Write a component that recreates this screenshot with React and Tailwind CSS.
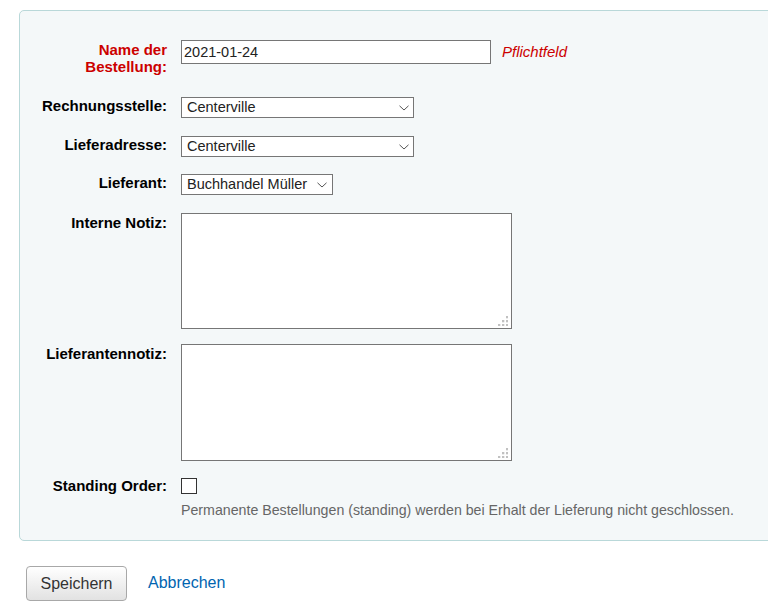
import React, { useState } from "react";

const FONT = "font-['Liberation_Sans',Arial,Helvetica,sans-serif]";

function Chevron({ className }) {
  return (
    <svg
      className={`pointer-events-none absolute top-[8px] ${className}`}
      width="10"
      height="6"
      viewBox="0 0 10 6"
      fill="none"
    >
      <path d="M0.5 0.8 L5 5 L9.5 0.8" stroke="#555" strokeWidth="1" />
    </svg>
  );
}

function Grip() {
  // Griffpunkte unten rechts am Textfeld
  const dots = [
    [8, 0],
    [4, 4],
    [8, 4],
    [0, 8],
    [4, 8],
    [8, 8],
  ];
  return (
    <svg
      className="pointer-events-none absolute right-[4px] bottom-[3px]"
      width="10"
      height="10"
      viewBox="0 0 10 10"
    >
      {dots.map(([x, y], i) => (
        <rect key={i} x={x} y={y} width="2.3" height="2.3" fill="#c1c1c1" />
      ))}
    </svg>
  );
}

function Row({ label, required, className = "", labelClass = "", children }) {
  return (
    <div className={`flex items-start ${className}`}>
      <label
        className={`block w-[140px] shrink-0 text-right font-bold text-[15px] leading-[17px] mr-[14px] ${
          required ? "text-[#cc0000]" : "text-black"
        } ${labelClass}`}
      >
        {label}
      </label>
      {children}
    </div>
  );
}

export default function App() {
  const [name, setName] = useState("2021-01-24");
  const [invoice, setInvoice] = useState("Centerville");
  const [delivery, setDelivery] = useState("Centerville");
  const [vendor, setVendor] = useState("Buchhandel Müller");
  const [standing, setStanding] = useState(false);

  const selectCls =
    "block appearance-none h-[21px] border border-[#767676] bg-white pl-[5px] text-[14.5px] leading-[19px] text-[#222] outline-none";

  return (
    <div className={`w-full min-h-[615px] overflow-hidden bg-white ${FONT}`}>
      <div className="mt-[10px] ml-[19px] mr-[-20px] border border-[#b9d8d9] rounded-[5px] bg-[#f4f8f9] pt-[29px] pb-[21px] pl-[7px]">
        <Row label="Name der Bestellung:" required labelClass="pt-[1px]">
          <input
            type="text"
            value={name}
            onChange={(e) => setName(e.target.value)}
            className="block w-[310px] h-[24px] border border-[#767676] bg-white pl-[2px] text-[14.5px] text-[#222] outline-none"
          />
          <span className="ml-[11px] mt-[2px] italic text-[15px] leading-[20px] text-[#cc0000]">
            Pflichtfeld
          </span>
        </Row>

        <Row label="Rechnungsstelle:" className="mt-[22px]">
          <div className="relative">
            <select
              value={invoice}
              onChange={(e) => setInvoice(e.target.value)}
              className={`${selectCls} w-[233px]`}
            >
              <option>Centerville</option>
            </select>
            <Chevron className="right-[5px]" />
          </div>
        </Row>

        <Row label="Lieferadresse:" className="mt-[18px]">
          <div className="relative">
            <select
              value={delivery}
              onChange={(e) => setDelivery(e.target.value)}
              className={`${selectCls} w-[233px]`}
            >
              <option>Centerville</option>
            </select>
            <Chevron className="right-[5px]" />
          </div>
        </Row>

        <Row label="Lieferant:" className="mt-[17px]">
          <div className="relative">
            <select
              value={vendor}
              onChange={(e) => setVendor(e.target.value)}
              className={`${selectCls} w-[152px]`}
            >
              <option>Buchhandel Müller</option>
            </select>
            <Chevron className="right-[6px]" />
          </div>
        </Row>

        <Row label="Interne Notiz:" className="mt-[18px]" labelClass="pt-[1px]">
          <div className="relative">
            <textarea className="block w-[331px] h-[116px] resize-none border border-[#767676] bg-white p-[2px] text-[14.5px] outline-none" />
            <Grip />
          </div>
        </Row>

        <Row label="Lieferantennotiz:" className="mt-[15px]" labelClass="pt-[1px]">
          <div className="relative">
            <textarea className="block w-[331px] h-[117px] resize-none border border-[#767676] bg-white p-[2px] text-[14.5px] outline-none" />
            <Grip />
          </div>
        </Row>

        <Row label="Standing Order:" className="mt-[16px]">
          <div className="flex flex-col">
            <input
              type="checkbox"
              checked={standing}
              onChange={(e) => setStanding(e.target.checked)}
              className="block appearance-none mt-[1px] w-[16px] h-[16px] border border-[#333] bg-white checked:bg-[#333]"
            />
            <p className="mt-[8px] text-[14.2px] leading-[17px] text-[#666] whitespace-nowrap">
              Permanente Bestellungen (standing) werden bei Erhalt der Lieferung nicht geschlossen.
            </p>
          </div>
        </Row>
      </div>

      <div className="flex items-center mt-[25px] ml-[26px]">
        <button
          type="button"
          className="w-[101px] h-[35px] rounded-[4px] border border-[#a8a8a8] bg-gradient-to-b from-white to-[#e2e2e2] text-[16px] text-[#333]"
        >
          Speichern
        </button>
        <a href="#" className="ml-[21px] -mt-[2px] text-[16px] text-[#0064b0]">
          Abbrechen
        </a>
      </div>
    </div>
  );
}
